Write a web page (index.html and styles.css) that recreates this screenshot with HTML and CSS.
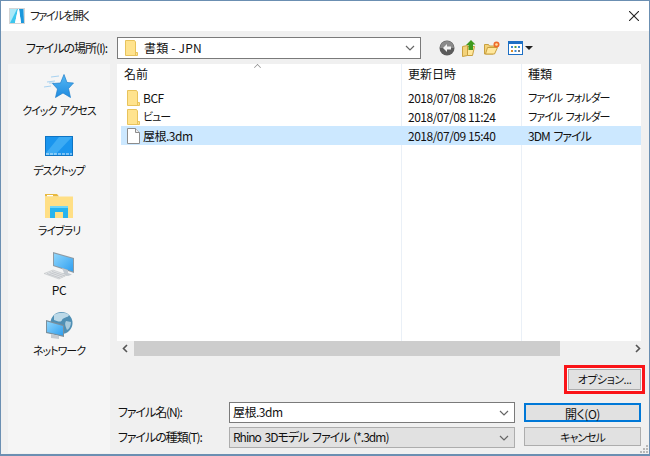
FILE: index.html
```html
<!DOCTYPE html>
<html lang="ja">
<head>
  <meta charset="UTF-8">
  <title>ファイルを開く</title>
  <link rel="stylesheet" href="styles.css">
</head>
<body>
  <svg class="defs" width="0" height="0">
    <symbol id="folder" viewBox="0 0 13 16">
      <path d="M.5.5h9l1 1.500v10.500h2v3h-12z" fill="#ffe38e" stroke="#e8c35c"/>
      <path d="M10.500 12v3.500" stroke="#e8c35c"/>
    </symbol>
    <symbol id="chevron" viewBox="0 0 10 6">
      <path d="M1 1l4 4 4-4" fill="none" stroke="#666" stroke-width="1.200"/>
    </symbol>
    <linearGradient id="face" x1="0" y1="0" x2="1" y2="1">
      <stop offset="0" stop-color="#8fd6fc"/>
      <stop offset="1" stop-color="#2f9ff0"/>
    </linearGradient>
    <linearGradient id="star" x1="0" y1="0" x2="0" y2="1">
      <stop offset="0" stop-color="#56b8f4"/>
      <stop offset="1" stop-color="#1f8be0"/>
    </linearGradient>
  </svg>

  <div class="window">
    <div class="titlebar">
      <svg class="app-icon" width="16" height="16" viewBox="0 0 16 16">
        <rect x=".5" y=".5" width="15" height="15" fill="#fff" stroke="#d5d5d5"/>
        <path d="M1 1h8L2 15H1z" fill="#a9e8f8"/>
        <path d="M1 15l7-14h1l-3 14z" fill="#3cc6ee"/>
        <path d="M10 1h4.500L15 15h-3z" fill="#1a97dc"/>
        <path d="M9 1h1l2 14h-2L9 7l-2 8H6z" fill="#fff"/>
      </svg>
      <span class="title k">ファイルを開く</span>
      <svg class="close" width="10" height="10" viewBox="0 0 10 10">
        <path d="M0 0l10 10M10 0L0 10" stroke="#222" stroke-width="1.100"/>
      </svg>
    </div>

    <div class="main">
      <div class="location-row">
        <label class="location-label">ファイルの場所(I):</label>
        <div class="combo location-combo">
          <svg class="combo-folder" width="13" height="16"><use href="#folder"/></svg>
          <span class="location-text">書類 - JPN</span>
          <svg class="chevron" width="10" height="6"><use href="#chevron"/></svg>
        </div>
        <div class="tools">
          <svg width="16" height="16" viewBox="0 0 16 16">
            <circle cx="8" cy="8" r="7.500" fill="#5b5b5b"/>
            <path d="M1 8a7 7 0 0 1 14 0z" fill="#8a8a8a"/>
            <path d="M8 4L4 8l4 4V9.500h4v-3H8z" fill="#f2f2f2"/>
          </svg>
          <svg width="15" height="17" viewBox="0 0 15 17">
            <path d="M.5 6.500l5-1v10l-5 1z" fill="#f3d27a" stroke="#c9a03f"/>
            <path d="M5.500 6.500h7l-2 9h-5z" fill="#ffe79c" stroke="#c9a03f"/>
            <path d="M9 0l4.500 4.500H11V10H6.500V5H4z" fill="#3f9a1e"/>
          </svg>
          <svg width="16" height="14" viewBox="0 0 16 14">
            <path d="M.5 3.500h4l1 1.500h5l-1.500 8h-8.500z" fill="#f3d27a" stroke="#c9a03f"/>
            <path d="M1.500 13l2-6.500h10l-3 6.500z" fill="#ffe79c" stroke="#c9a03f"/>
            <circle cx="12.500" cy="3.500" r="3" fill="#ef6a2a"/>
            <circle cx="12.500" cy="3.500" r="1.300" fill="#ffe0a0"/>
          </svg>
          <div class="views">
            <svg width="15" height="14" viewBox="0 0 15 14">
              <rect x=".5" y=".5" width="14" height="13" fill="#fff" stroke="#1d6fc4"/>
              <path d="M1 1h13v2H1z" fill="#1d6fc4"/>
              <path d="M3 5h2v2H3z" fill="#3a8ad6"/><path d="M6.500 5h2v2h-2z" fill="#54a040"/><path d="M10 5h2v2h-2z" fill="#3a8ad6"/>
              <path d="M3 9h2v2H3z" fill="#d98a2a"/><path d="M6.500 9h2v2h-2z" fill="#3a8ad6"/><path d="M10 9h2v2h-2z" fill="#777"/>
            </svg>
            <span class="caret"></span>
          </div>
        </div>
      </div>

      <div class="content">
        <nav class="sidebar">
          <div class="place">
            <svg width="30" height="24" viewBox="0 0 30 24">
              <path d="M7 3l8-1M3 8l8-1M0 13l7-1" stroke="#a8d2f0" stroke-width="1.200"/>
              <path d="M5 9h5" stroke="#a8d2f0"/>
              <path d="M20 .5l3 8 6.500.5-5 5.500 2 9-7.500-4.500-7.500 4.500 2-8.500-5-5.500 8-.5z" fill="url(#star)" stroke="#1c7ecb" stroke-width=".7"/>
            </svg>
            <span class="k">クイック アクセス</span>
          </div>
          <div class="place">
            <svg width="28" height="24" viewBox="0 0 28 24">
              <rect x=".5" y="2.500" width="27" height="19" fill="#1a95ee" stroke="#0e74c4"/>
              <path d="M14 3h13L10 21H1v-2z" fill="#3cabf4"/>
              <path d="M1 20h26" stroke="#d8eefb" stroke-dasharray="3 1"/>
            </svg>
            <span class="k">デスクトップ</span>
          </div>
          <div class="place">
            <svg width="28" height="24" viewBox="0 0 28 24">
              <path d="M0 0h12l2 2.500H0z" fill="#e8b93f"/>
              <path d="M2 1h6v1.500H2z" fill="#fff"/>
              <path d="M0 2.500h28V24H0z" fill="#ffdf85"/>
              <path d="M5 12h18v12H18v-6h-8v6H5z" fill="#27b4ee"/>
              <path d="M5 12h18v2H5z" fill="#6fd6f8"/>
            </svg>
            <span class="k">ライブラリ</span>
          </div>
          <div class="place">
            <svg width="32" height="28" viewBox="0 0 32 28">
              <path d="M10 0l21 6v15L10 14z" fill="#8e9aa3"/>
              <path d="M11 1.500l19 5.300v12.700l-19-6.300z" fill="url(#face)"/>
              <path d="M19 16l6 2v3l4 1.500-4 1.500-7-2 3-1z" fill="#c4cad0"/>
              <path d="M1 21.500l9-3.500 14 5-8 4z" fill="#e2e4e6" stroke="#b8bcbf" stroke-width=".5"/>
              <path d="M4 21.500l13 4.500M6.500 20.500l13 4.500M9 19.500l13 4.500" stroke="#b0b4b8" stroke-width=".6"/>
            </svg>
            <span>PC</span>
          </div>
          <div class="place">
            <svg width="28" height="28" viewBox="0 0 28 28">
              <circle cx="16.500" cy="11" r="11" fill="#4f8fb4"/>
              <path d="M9 3c4-3 12-3 15 0-1 3-6 2-7 5s-5 1-8 0z" fill="#bcd9e8"/>
              <path d="M21 9l5 1c0 4-2 7-4 8-1-3-3-6-1-9z" fill="#a8cbdd"/>
              <path d="M1 8l18 5v12L1 21z" fill="#7a8f9c"/>
              <path d="M2 9.500l16 4.500v9.500L2 20z" fill="url(#face)"/>
              <path d="M6 22l8 2v3l-8-1z" fill="#c4cad0"/>
            </svg>
            <span class="k">ネットワーク</span>
          </div>
        </nav>

        <div class="right">
          <div class="list">
            <div class="list-head">
              <span class="sort-mark"></span>
              <div class="cell cell-name">名前</div>
              <div class="cell">更新日時</div>
              <div class="cell">種類</div>
            </div>
            <div class="row">
              <div class="cell cell-name"><svg class="file-icon" width="13" height="16"><use href="#folder"/></svg>BCF</div>
              <div class="cell">2018/07/08 18:26</div>
              <div class="cell k">ファイル フォルダー</div>
            </div>
            <div class="row">
              <div class="cell cell-name k"><svg class="file-icon" width="13" height="16"><use href="#folder"/></svg>ビュー</div>
              <div class="cell">2018/07/08 11:24</div>
              <div class="cell k">ファイル フォルダー</div>
            </div>
            <div class="row selected">
              <div class="cell cell-name">
                <svg class="file-icon" width="13" height="16" viewBox="0 0 13 16">
                  <path d="M.5.500h8l4 4v11H.5z" fill="#fff" stroke="#8c8c8c"/>
                  <path d="M8.500.5v4h4" fill="#eee" stroke="#8c8c8c"/>
                </svg>屋根.3dm
              </div>
              <div class="cell">2018/07/09 15:40</div>
              <div class="cell mixed">3DM ファイル</div>
            </div>
          </div>

          <div class="hscroll">
            <svg class="arrow" width="6" height="9" viewBox="0 0 6 9"><path d="M5 1L1.500 4.500 5 8" fill="none" stroke="#555" stroke-width="1.600"/></svg>
            <div class="track"><div class="thumb"></div></div>
            <svg class="arrow" width="6" height="9" viewBox="0 0 6 9"><path d="M1 1l3.500 3.500L1 8" fill="none" stroke="#555" stroke-width="1.600"/></svg>
          </div>

          <div class="options-row">
            <button class="btn options"><span class="k">オプション...</span></button>
          </div>

          <div class="form">
            <label>ファイル名(N):</label>
            <div class="combo name-combo">
              <span>屋根.3dm</span>
              <svg class="chevron" width="10" height="6"><use href="#chevron"/></svg>
            </div>
            <button class="btn primary">開く(O)</button>

            <label>ファイルの種類(T):</label>
            <div class="combo type-combo">
              <span class="mixed">Rhino 3Dモデル ファイル (*.3dm)</span>
              <svg class="chevron" width="10" height="6"><use href="#chevron"/></svg>
            </div>
            <button class="btn cancel"><span class="k">キャンセル</span></button>
          </div>
        </div>
      </div>
    </div>

    <svg class="grip" width="10" height="10" viewBox="0 0 10 10">
      <path d="M7 1h2v2H7zM4 4h2v2H4zM7 4h2v2H7zM1 7h2v2H1zM4 7h2v2H4zM7 7h2v2H7z" fill="#b8b8b8"/>
    </svg>
  </div>
</body>
</html>
```

FILE: styles.css
```css
html, body {
  margin: 0;
  padding: 0;
  background-color: #f0f0f0;
}

body {
  font-family: "Noto Sans CJK JP", "Noto Sans", sans-serif;
  font-size: 12px;
  font-feature-settings: "palt";
  color: #111;
}

.defs {
  position: absolute;
}

/* kana runs are much narrower in the original UI font */
.k {
  font-size: 11px;
  letter-spacing: -1px;
  word-spacing: 2px;
}

.mixed {
  letter-spacing: -1px;
  word-spacing: 2px;
}

.window {
  position: relative;
  box-sizing: border-box;
  width: 650px;
  height: 456px;
  display: flex;
  flex-direction: column;
  border: 1px solid #6b8fb2;
  border-bottom-width: 2px;
  letter-spacing: -0.5px;
}

.titlebar {
  height: 30px;
  flex: none;
  display: flex;
  align-items: center;
  background-color: #fff;
  padding: 0 10px 0 8px;
}

.title {
  margin-left: 5px;
  padding-bottom: 2px;
  font-size: 11.5px;
  letter-spacing: -1.6px;
  color: #222;
}

.close {
  margin-left: auto;
}

.main {
  flex: 1;
  min-height: 0;
  display: flex;
  flex-direction: column;
  padding: 6px 8px 1px 7px;
  background-color: #f0f0f0;
}

.location-row {
  display: flex;
  align-items: center;
  height: 22px;
  flex: none;
}

.location-label {
  width: 109px;
  padding: 0 0 2px 18px;
  box-sizing: border-box;
  letter-spacing: -1px;
  white-space: nowrap;
}

.combo {
  box-sizing: border-box;
  display: flex;
  align-items: center;
  border: 1px solid #7a7a7a;
  background-color: #fff;
}

.combo span {
  padding-bottom: 2px;
}

.chevron {
  margin-left: auto;
  flex: none;
}

.location-combo {
  width: 304px;
  height: 22px;
  padding: 0 5px 0 7px;
}

.location-text {
  margin-left: 6px;
  letter-spacing: 0.2px;
}

.tools {
  display: flex;
  align-items: center;
  gap: 7px;
  margin-left: 18px;
}

.views {
  display: flex;
  align-items: center;
  gap: 2px;
  margin-left: 1px;
}

.caret {
  width: 0;
  height: 0;
  border-left: 4px solid transparent;
  border-right: 4px solid transparent;
  border-top: 4px solid #222;
}

.content {
  flex: 1;
  min-height: 0;
  display: flex;
  margin-top: 5px;
}

.sidebar {
  width: 102px;
  flex: none;
  box-sizing: border-box;
  padding-top: 8px;
  background-color: #f5f5f5;
}

.place {
  height: 60px;
  display: flex;
  flex-direction: column;
  align-items: center;
}

.place svg {
  height: 28px;
  flex: none;
}

.place span {
  margin-top: 2px;
  line-height: 16px;
  color: #111;
}

.right {
  flex: 1;
  min-width: 0;
  margin-left: 7px;
  display: flex;
  flex-direction: column;
}

.list {
  position: relative;
  height: 277px;
  flex: none;
  padding: 0 0 0 4px;
  background-color: #fff;
  background-image:
    linear-gradient(#eaf0f7, #eaf0f7),
    linear-gradient(#eaf0f7, #eaf0f7);
  background-size: 1px 100%;
  background-position: 284px 0, 404px 0;
  background-repeat: no-repeat;
}

.list-head,
.row {
  display: grid;
  grid-template-columns: 280px 120px 120px;
}

.list-head {
  height: 24px;
  align-items: center;
  letter-spacing: 0;
  padding-bottom: 3px;
  box-sizing: border-box;
}

.row {
  height: 19px;
  align-items: center;
}

.cell {
  display: flex;
  align-items: center;
  padding-left: 7px;
  padding-bottom: 2px;
  white-space: nowrap;
}

.cell-name {
  padding-left: 3px;
}

.file-icon {
  margin: 2px 3px 0 3px;
  flex: none;
}

.selected {
  background-color: #cce8ff;
}

.sort-mark {
  position: absolute;
  left: 137px;
  top: 0;
  width: 6px;
  height: 6px;
  border-left: 1px solid #888;
  border-top: 1px solid #888;
  transform: rotate(45deg) scale(0.7);
}

.hscroll {
  height: 15px;
  flex: none;
  display: flex;
  align-items: center;
  padding: 0 0 0 5px;
}

.track {
  flex: 1;
  height: 15px;
  margin: 0 11px 0 6px;
}

.thumb {
  width: 426px;
  height: 15px;
  background-color: #cdcdcd;
}

.options-row {
  display: flex;
  justify-content: flex-end;
  margin-top: 13px;
}

.btn {
  box-sizing: border-box;
  font: inherit;
  letter-spacing: inherit;
  color: #111;
  padding: 0 0 2px;
  background-color: #e1e1e1;
  border: 1px solid #adadad;
  border-radius: 0;
}

.options {
  width: 73px;
  height: 21px;
  outline: 3px solid #fa1418;
  outline-offset: 1px;
  box-shadow: 0 0 0 1px #f8f8f8;
}

.options .k {
  letter-spacing: -0.5px;
}

.form {
  display: grid;
  grid-template-columns: 112px 286px 117px;
  grid-auto-rows: 25px;
  margin-top: 10px;
  align-items: center;
}

.form label {
  padding: 0 0 2px 1px;
  letter-spacing: -1.1px;
}

.name-combo,
.type-combo {
  height: 21px;
  padding: 0 5px 0 3px;
}

.type-combo {
  background-color: #e1e1e1;
  border-color: #adadad;
}

.form .btn {
  width: 117px;
  margin-left: 9px;
  height: 19px;
}

.form .primary {
  border: 2px solid #0078d7;
}

.form .cancel {
  margin-bottom: 2px;
}

.grip {
  position: absolute;
  right: 0;
  bottom: 0;
}
```
